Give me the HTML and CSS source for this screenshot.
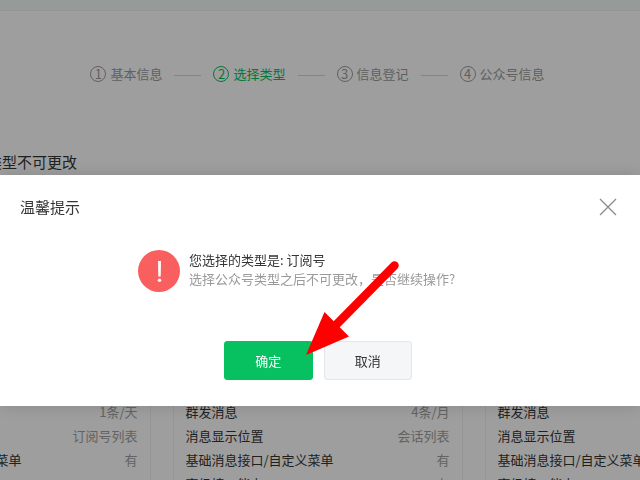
FILE: index.html
```html
<!DOCTYPE html>
<html lang="zh-CN">
<head>
  <meta charset="UTF-8">
  <meta name="viewport" content="width=device-width, initial-scale=1.0">
  <title>选择类型</title>
  <link rel="stylesheet" href="styles.css">
</head>
<body>
  <div class="topbar"></div>

  <main class="page">
    <ol class="steps">
      <li class="step"><span class="num">1</span>基本信息</li>
      <li class="step active"><span class="num">2</span>选择类型</li>
      <li class="step"><span class="num">3</span>信息登记</li>
      <li class="step"><span class="num">4</span>公众号信息</li>
    </ol>

    <h1 class="page-title">类型不可更改</h1>

    <div class="cards">
      <div class="card">
        <table>
          <tr><th>群发消息</th><td>1条/天</td></tr>
          <tr><th>消息显示位置</th><td>订阅号列表</td></tr>
          <tr><th>基础消息接口/自定义菜单</th><td>有</td></tr>
        </table>
      </div>
      <div class="card">
        <table>
          <tr><th>群发消息</th><td>4条/月</td></tr>
          <tr><th>消息显示位置</th><td>会话列表</td></tr>
          <tr><th>基础消息接口/自定义菜单</th><td>有</td></tr>
          <tr><th>高级接口能力</th><td>有</td></tr>
        </table>
      </div>
      <div class="card">
        <table>
          <tr><th>群发消息</th><td></td></tr>
          <tr><th>消息显示位置</th><td></td></tr>
          <tr><th>基础消息接口/自定义菜单</th><td></td></tr>
          <tr><th>高级接口能力</th><td></td></tr>
        </table>
      </div>
    </div>
  </main>

  <div class="mask">
    <div class="dialog" role="dialog" aria-labelledby="dialog-title">
      <div class="dialog-head">
        <h2 id="dialog-title">温馨提示</h2>
        <button class="close" type="button" aria-label="关闭">
          <svg width="18" height="18" viewBox="0 0 18 18">
            <path d="M1 1L17 17M17 1L1 17" fill="none" stroke="#8c8c8c" stroke-width="1.3"/>
          </svg>
        </button>
      </div>
      <div class="message">
        <svg class="warn" width="42" height="42" viewBox="0 0 42 42">
          <circle cx="21" cy="21" r="21" fill="#fa5f5f"/>
          <path d="M20 11h3l-.3 15.500h-2.400z" fill="#fff"/>
          <circle cx="21.500" cy="30.300" r="1.700" fill="#fff"/>
        </svg>
        <div>
          <p>您选择的类型是: 订阅号</p>
          <p class="tip">选择公众号类型之后不可更改，是否继续操作?</p>
        </div>
      </div>
      <div class="actions">
        <button class="btn primary" type="button">确定</button>
        <button class="btn" type="button">取消</button>
        <svg class="arrow" width="94" height="96" viewBox="0 0 94 96">
          <path d="M0 95L18.500 52L28 61.500L43 76.500Z" fill="#fe0000"/>
          <path d="M28 67L88.500 5.500" fill="none" stroke="#fe0000" stroke-width="8.500" stroke-linecap="round"/>
        </svg>
      </div>
    </div>
  </div>
</body>
</html>
```

FILE: styles.css
```css
* {
  box-sizing: border-box;
}
html, body {
  height: 100%;
  overflow: hidden;
}
body {
  margin: 0;
  background: #fff;
  color: #353535;
  font-family: "Noto Sans CJK SC", sans-serif;
  font-size: 13px;
  line-height: 20px;
}
h1, h2, p, ol {
  margin: 0;
  padding: 0;
}
button {
  font-family: inherit;
  font-size: 13px;
  cursor: pointer;
}
.topbar {
  height: 11px;
  background: #f2f8f5;
  border-bottom: 1px solid #ebefed;
}
.page {
  padding-right: 5px;
}

/* steps */
.steps {
  display: flex;
  justify-content: center;
  padding-top: 53px;
  list-style: none;
  color: #9c9c9c;
}
.step {
  display: flex;
  align-items: center;
  white-space: nowrap;
}
.step + .step::before {
  content: "";
  width: 27px;
  margin: 2px 12px 0;
  border-top: 1px solid #d6d6d6;
}
.num {
  width: 16px;
  height: 16px;
  margin-right: 4px;
  border: 1px solid;
  border-radius: 50%;
  font-size: 13px;
  line-height: 14px;
  text-align: center;
}
.active {
  color: #07c160;
}

.page-title {
  margin: 68px 0 0 -13px;
  font-size: 15px;
  font-weight: normal;
}

/* account types */
.cards {
  display: grid;
  grid-template-columns: repeat(3, 290px);
  justify-content: center;
  gap: 22px;
  margin-top: 40px;
}
.card {
  padding: 187px 12px 40px;
  border: 1px solid #f0f0f0;
}
.card table {
  width: 100%;
  border-collapse: collapse;
}
.card th, .card td {
  height: 24px;
  padding: 0;
  white-space: nowrap;
}
.card th {
  font-weight: normal;
  text-align: left;
}
.card td {
  color: #a0a0a0;
  text-align: right;
}

/* dialog */
.mask {
  position: fixed;
  inset: 0;
  padding-top: 175px;
  background: rgba(0, 0, 0, 0.38);
}
.dialog {
  padding: 0 20px 26px;
  background: #fff;
  box-shadow: 0 0 16px rgba(0, 0, 0, 0.15);
}
.dialog-head {
  display: flex;
  align-items: center;
  justify-content: space-between;
  height: 64px;
}
.dialog-head h2 {
  font-size: 15px;
  font-weight: normal;
}
.close {
  display: flex;
  padding: 3px;
  border: 0;
  background: none;
}
.message {
  display: flex;
  gap: 9px;
  padding: 11px 0 0 118px;
  line-height: 19px;
}
.warn {
  flex: none;
}
.tip {
  color: #9a9a9a;
}
.actions {
  position: relative;
  display: flex;
  justify-content: center;
  gap: 11px;
  width: 192px;
  margin: 49px auto 0;
  padding-right: 4px;
}
.btn {
  flex: 1;
  height: 39px;
  border: 1px solid #e4e6e9;
  border-radius: 3px;
  background: #f5f6f8;
  color: #353535;
}
.primary {
  border-color: #07c160;
  background: #07c160;
  color: #fff;
}
.arrow {
  position: absolute;
  left: 82px;
  bottom: 24px;
}
```
